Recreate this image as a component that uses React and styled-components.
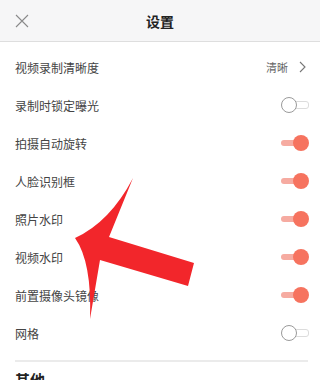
import React from "react";
import styled, { createGlobalStyle } from "styled-components";

const Global = createGlobalStyle`
  html, body { margin: 0; padding: 0; background: #fff; }
  body { font-family: "Noto Sans CJK SC", "Noto Sans", sans-serif; }
`;

const Page = styled.div`
  position: relative;
  width: 320px;
  height: 380px;
  overflow: hidden;
  background: #fff;
`;

const Header = styled.div`
  height: 41px;
  background: #f6f6f7;
  border-bottom: 1px solid #dedede;
  display: grid;
  grid-template-columns: 44px 1fr 44px;
  align-items: center;
`;

const Close = styled.div`
  display: flex;
  align-items: center;
  justify-content: center;
  padding-left: 0;
  height: 100%;
`;

const Title = styled.div`
  text-align: center;
  font-size: 14px;
  font-weight: 700;
  color: #222;
`;

const List = styled.div`
  padding-top: 6px;
`;

const Row = styled.div`
  height: 38px;
  display: flex;
  align-items: center;
  justify-content: space-between;
  padding: 0 11px 0 15px;
`;

const Label = styled.span`
  font-size: 12px;
  color: #444;
`;

const Value = styled.div`
  display: flex;
  align-items: center;
  gap: 11px;
  font-size: 11px;
  color: #666;
  padding-right: 3px;
`;

const Toggle = styled.div`
  position: relative;
  width: 28px;
  height: 16px;
`;

const Track = styled.div`
  position: absolute;
  top: 5px;
  height: 6px;
  border-radius: 3px;
  ${(p) =>
    p.$on
      ? `left: 0; width: 20px; background: #f6aba1;`
      : `left: 12px; width: 14px; background: #fff; border: 1px solid #dcdcdc; top: 4px;`}
`;

const Knob = styled.div`
  position: absolute;
  top: 0;
  width: 16px;
  height: 16px;
  border-radius: 50%;
  box-sizing: border-box;
  ${(p) =>
    p.$on
      ? `right: 0; background: #f6735f;`
      : `left: 0; background: #fff; border: 1.3px solid #9a9a9a;`}
`;

const Divider = styled.div`
  height: 2px;
  background: #ebebeb;
  margin: 8px 12px 0 15px;
`;

const SectionTitle = styled.div`
  padding: 8px 15px 0;
  font-size: 15px;
  font-weight: 700;
  color: #222;
  line-height: 20px;
`;

const ArrowLayer = styled.svg`
  position: absolute;
  left: 0;
  top: 0;
  pointer-events: none;
`;

const Switch = ({ on }) => (
  <Toggle>
    <Track $on={on} />
    <Knob $on={on} />
  </Toggle>
);

const rows = [
  { label: "录制时锁定曝光", on: false },
  { label: "拍摄自动旋转", on: true },
  { label: "人脸识别框", on: true },
  { label: "照片水印", on: true },
  { label: "视频水印", on: true },
  { label: "前置摄像头镜像", on: true },
  { label: "网格", on: false },
];

export default function App() {
  return (
    <Page>
      <Global />
      <Header>
        <Close>
          <svg width="14" height="14" viewBox="0 0 14 14">
            <path d="M1 1 L13 13 M13 1 L1 13" stroke="#8a8a8a" strokeWidth="1.1" fill="none" />
          </svg>
        </Close>
        <Title>设置</Title>
        <div />
      </Header>
      <List>
        <Row>
          <Label>视频录制清晰度</Label>
          <Value>
            清晰
            <svg width="7" height="12" viewBox="0 0 7 12">
              <path d="M1 1 L6 6 L1 11" stroke="#777" strokeWidth="1.1" fill="none" />
            </svg>
          </Value>
        </Row>
        {rows.map((r) => (
          <Row key={r.label}>
            <Label>{r.label}</Label>
            <Switch on={r.on} />
          </Row>
        ))}
      </List>
      <Divider />
      <SectionTitle>其他</SectionTitle>
      <ArrowLayer width="320" height="380" viewBox="0 0 320 380">
        <path
          d="M75 238 Q110 222 133 178 L109 237 L194 263 L188 286 L100 260 L90 319 Q92 262 75 238 Z"
          fill="#f2262b"
        />
      </ArrowLayer>
    </Page>
  );
}
